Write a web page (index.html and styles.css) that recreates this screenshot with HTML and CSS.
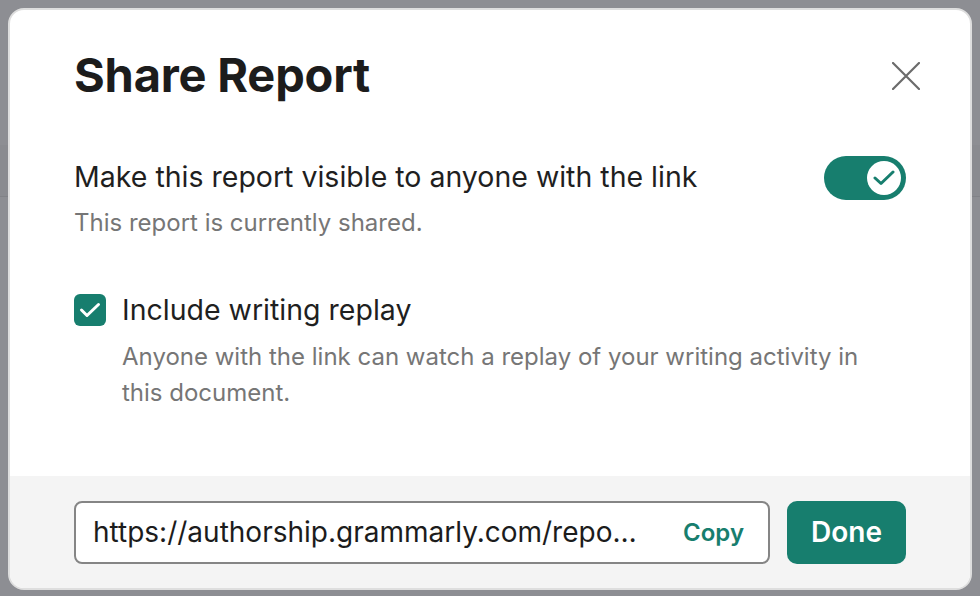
FILE: index.html
```html
<!DOCTYPE html>
<html lang="en">

<head>
  <meta charset="UTF-8">
  <meta name="viewport" content="width=device-width, initial-scale=1.0">
  <title>Share Report</title>
  <link rel="stylesheet" href="styles.css">
</head>

<body>

  <div class="page_behind">
    <div class="page_toolbar"></div>
  </div>

  <div class="share_modal" role="dialog" aria-labelledby="share-title">
    <div class="share_body">
      <div class="share_header">
        <h2 id="share-title">Share Report</h2>
        <button class="close_btn" aria-label="Close">
          <svg width="28" height="28" viewBox="0 0 28 28">
            <path d="M1 1 L27 27 M27 1 L1 27" stroke="#6b6b6b" stroke-width="2.2" stroke-linecap="round" fill="none" />
          </svg>
        </button>
      </div>

      <div class="option_row">
        <div class="option_title">Make this report visible to anyone with the link</div>
        <div class="toggle is-on">
          <div class="toggle_knob">
            <svg width="22" height="16" viewBox="0 0 22 16">
              <path d="M2 8 L8 13.5 L20 2" stroke="#177e6e" stroke-width="3" stroke-linecap="round" stroke-linejoin="round" fill="none" />
            </svg>
          </div>
        </div>
      </div>
      <p class="option_note">This report is currently shared.</p>

      <div class="check_row">
        <div class="checkbox is-checked">
          <svg width="22" height="16" viewBox="0 0 22 16">
            <path d="M2.5 8 L8 13.5 L19.5 2.5" stroke="#fff" stroke-width="3" stroke-linecap="round" stroke-linejoin="round" fill="none" />
          </svg>
        </div>
        <div class="option_title">Include writing replay</div>
      </div>
      <p class="option_note check_note">Anyone with the link can watch a replay of your writing activity in this document.</p>
    </div>

    <div class="share_footer">
      <div class="link_field">
        <span class="link_text">https://authorship.grammarly.com/repo…</span>
        <button class="copy_btn">Copy</button>
      </div>
      <button class="done_btn">Done</button>
    </div>
  </div>

</body>

</html>
```

FILE: styles.css
```css
body {
  margin: 0;
  width: 980px;
  height: 596px;
  overflow: hidden;
  background: #8d8e93;
  font-family: Inter, "Noto Sans", sans-serif;
  position: relative;
}

/* dimmed app behind the dialog */
.page_behind {
  padding-top: 145px;
}

.page_toolbar {
  height: 51px;
  background: #8a8b90;
  border-bottom: 1px solid #818287;
}

.share_modal {
  position: absolute;
  top: 8px;
  left: 8px;
  width: 964px;
  height: 582px;
  box-sizing: border-box;
  border: 2px solid #dedede;
  border-radius: 16px;
  background: #fff;
  overflow: hidden;
  display: flex;
  flex-direction: column;
}

.share_body {
  flex: 1;
  padding: 37px 64px 0;
}

.share_header {
  display: flex;
  justify-content: space-between;
  align-items: flex-start;
  margin-bottom: 56px;
}

.share_header h2 {
  margin: 0;
  font-size: 47px;
  line-height: 56px;
  font-weight: 700;
  color: #1c1c1c;
  letter-spacing: -0.2px;
}

.close_btn {
  border: 0;
  background: none;
  padding: 0;
  margin: 15px -14px 0 0;
  width: 28px;
  height: 28px;
  cursor: pointer;
}

.option_row {
  display: flex;
  justify-content: space-between;
  align-items: flex-start;
}

.option_title {
  font-size: 28.5px;
  line-height: 36px;
  color: #1f1f1f;
}

.option_note {
  margin: 5px 0 0;
  font-size: 24px;
  line-height: 36px;
  color: #767676;
}

.toggle {
  width: 82px;
  height: 44px;
  margin-top: -3px;
  border-radius: 22px;
  background: #177e6e;
  display: flex;
  align-items: center;
  justify-content: flex-end;
  padding: 0 5px;
  box-sizing: border-box;
}

.toggle_knob {
  width: 34px;
  height: 34px;
  border-radius: 50%;
  background: #fff;
  display: flex;
  align-items: center;
  justify-content: center;
}

.check_row {
  display: flex;
  align-items: center;
  gap: 16px;
  margin-top: 51px;
}

.checkbox {
  width: 32px;
  height: 32px;
  border-radius: 6px;
  background: #177e6e;
  display: flex;
  align-items: center;
  justify-content: center;
}

.check_note {
  margin-left: 48px;
  margin-top: 11px;
  max-width: 750px;
}

.share_footer {
  height: 112px;
  background: #f4f4f4;
  padding: 0 64px;
  display: flex;
  align-items: center;
  gap: 17px;
}

.link_field {
  flex: 1;
  min-width: 0;
  height: 63px;
  box-sizing: border-box;
  border: 2px solid #858585;
  border-radius: 8px;
  background: #fff;
  display: flex;
  align-items: center;
  justify-content: space-between;
  padding: 0 24px 0 17px;
}

.link_text {
  font-size: 28px;
  color: #1c1c1c;
  white-space: nowrap;
}

.copy_btn {
  border: 0;
  background: none;
  padding: 0;
  font-family: inherit;
  font-size: 24px;
  font-weight: 600;
  color: #177e6e;
}

.done_btn {
  flex: none;
  width: 119px;
  height: 63px;
  border: 0;
  border-radius: 10px;
  background: #177e6e;
  color: #fff;
  font-family: inherit;
  font-size: 28px;
  font-weight: 600;
}
```
